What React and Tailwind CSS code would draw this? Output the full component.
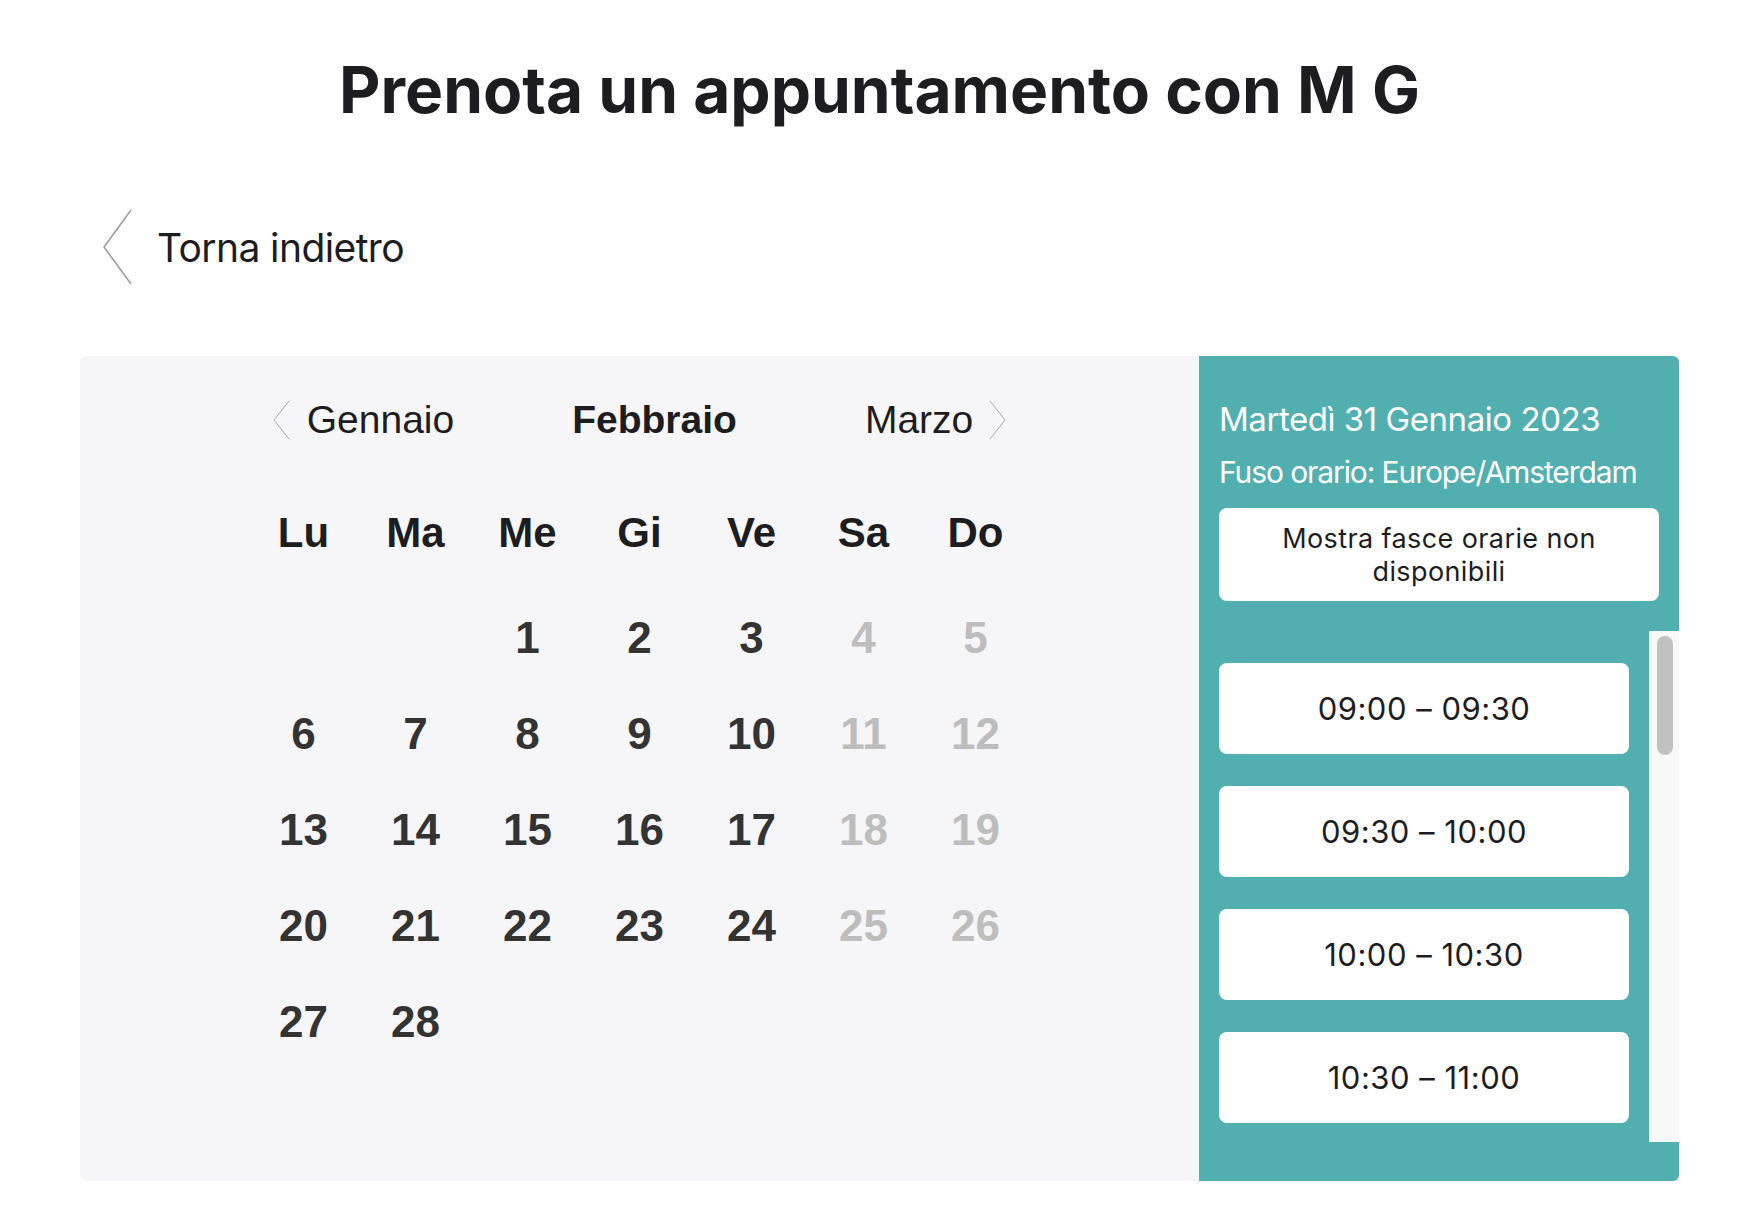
import React from "react";

const INTER = "font-['Inter',sans-serif]";
const ARIAL = "font-['Liberation_Sans',Arial,sans-serif]";

function Chevron({ dir = "left", w, h, color, stroke }) {
  const pts = dir === "left" ? `${w - 1},1 1,${h / 2} ${w - 1},${h - 1}` : `1,1 ${w - 1},${h / 2} 1,${h - 1}`;
  return (
    <svg width={w} height={h} viewBox={`0 0 ${w} ${h}`} className="shrink-0">
      <polyline points={pts} fill="none" stroke={color} strokeWidth={stroke} />
    </svg>
  );
}

const weekdays = ["Lu", "Ma", "Me", "Gi", "Ve", "Sa", "Do"];

function buildDays() {
  const cells = [null, null];
  for (let d = 1; d <= 28; d++) cells.push(d);
  return cells;
}

const slots = ["09:00 – 09:30", "09:30 – 10:00", "10:00 – 10:30", "10:30 – 11:00"];

export default function App() {
  const cells = buildDays();
  return (
    <div className="min-h-screen bg-white pl-[80px] pr-[59px] pt-[51px]">
      <h1 className={`${INTER} text-center text-[64px] leading-[77px] font-bold text-[#1d1d1f]`}>
        Prenota un appuntamento con M G
      </h1>

      <div className="mt-[81px] flex h-[76px] items-center pl-[23px]">
        <Chevron dir="left" w={29} h={76} color="#9a9a9a" stroke={1.5} />
        <span className={`${INTER} ml-[25px] text-[39px] leading-[47px] tracking-[-0.6px] text-[#1d1d1f]`}>
          Torna indietro
        </span>
      </div>

      <div className="mt-[71px] flex h-[825px]">
        <div className="flex-1 rounded-l-[6px] bg-[#f6f6f8] pt-[42px]">
          <div className={`${ARIAL} flex h-[44px] items-center justify-center text-[39px] leading-[44px] text-[#1d1d1f]`}>
            <Chevron dir="left" w={17} h={40} color="#a8a8a8" stroke={1} />
            <span className="ml-[17px]">Gennaio</span>
            <span className="ml-[118px] font-bold">Febbraio</span>
            <span className="ml-[128px]">Marzo</span>
            <span className="ml-[16px]">
              <Chevron dir="right" w={17} h={40} color="#a8a8a8" stroke={1} />
            </span>
          </div>

          <div className={`${ARIAL} mx-auto mt-[43px] grid w-[784px] grid-cols-7`}>
            {weekdays.map((d) => (
              <div key={d} className="text-center text-[42px] leading-[96px] font-bold text-[#1d1d1f]">
                {d}
              </div>
            ))}
          </div>

          <div className={`${ARIAL} mx-auto mt-[9px] grid w-[784px] grid-cols-7`}>
            {cells.map((d, i) => {
              const col = i % 7;
              const weekend = col >= 5;
              return (
                <div
                  key={i}
                  className={`h-[96px] text-center text-[44px] leading-[96px] font-bold ${
                    weekend ? "text-[#bdbdbd]" : "text-[#333333]"
                  }`}
                >
                  {d ?? ""}
                </div>
              );
            })}
          </div>
        </div>

        <div className={`${INTER} flex w-[480px] flex-col rounded-r-[6px] bg-[#52afb0] pb-[39px] pl-[20px] pt-[43px]`}>
          <div className="text-[33px] leading-[40px] tracking-[-0.45px] text-white">Martedì 31 Gennaio 2023</div>
          <div className="mt-[15px] text-[30px] leading-[36px] tracking-[-1.1px] text-white">
            Fuso orario: Europe/Amsterdam
          </div>
          <div className="mt-[18px] flex h-[93px] w-[440px] items-center justify-center rounded-[8px] bg-white px-[20px] text-center text-[27px] leading-[33px] tracking-[0.4px] text-[#1d1d1f]">
            Mostra fasce orarie non disponibili
          </div>

          <div className="mt-[30px] flex min-h-0 flex-1">
            <div className="flex w-[430px] flex-col gap-[32px] overflow-hidden pt-[32px]">
              {slots.map((s) => (
                <div
                  key={s}
                  className="flex h-[91px] w-[410px] shrink-0 items-center justify-center rounded-[8px] bg-white text-[31px] leading-[36px] tracking-[0.5px] text-[#1d1d1f]"
                >
                  {s}
                </div>
              ))}
            </div>
            <div className="w-[30px] border-l border-[#ebebeb] bg-[#f8f8f8] pt-[5px]">
              <div className="mx-auto h-[119px] w-[16px] rounded-full bg-[#c1c1c1]" />
            </div>
          </div>
        </div>
      </div>
    </div>
  );
}
